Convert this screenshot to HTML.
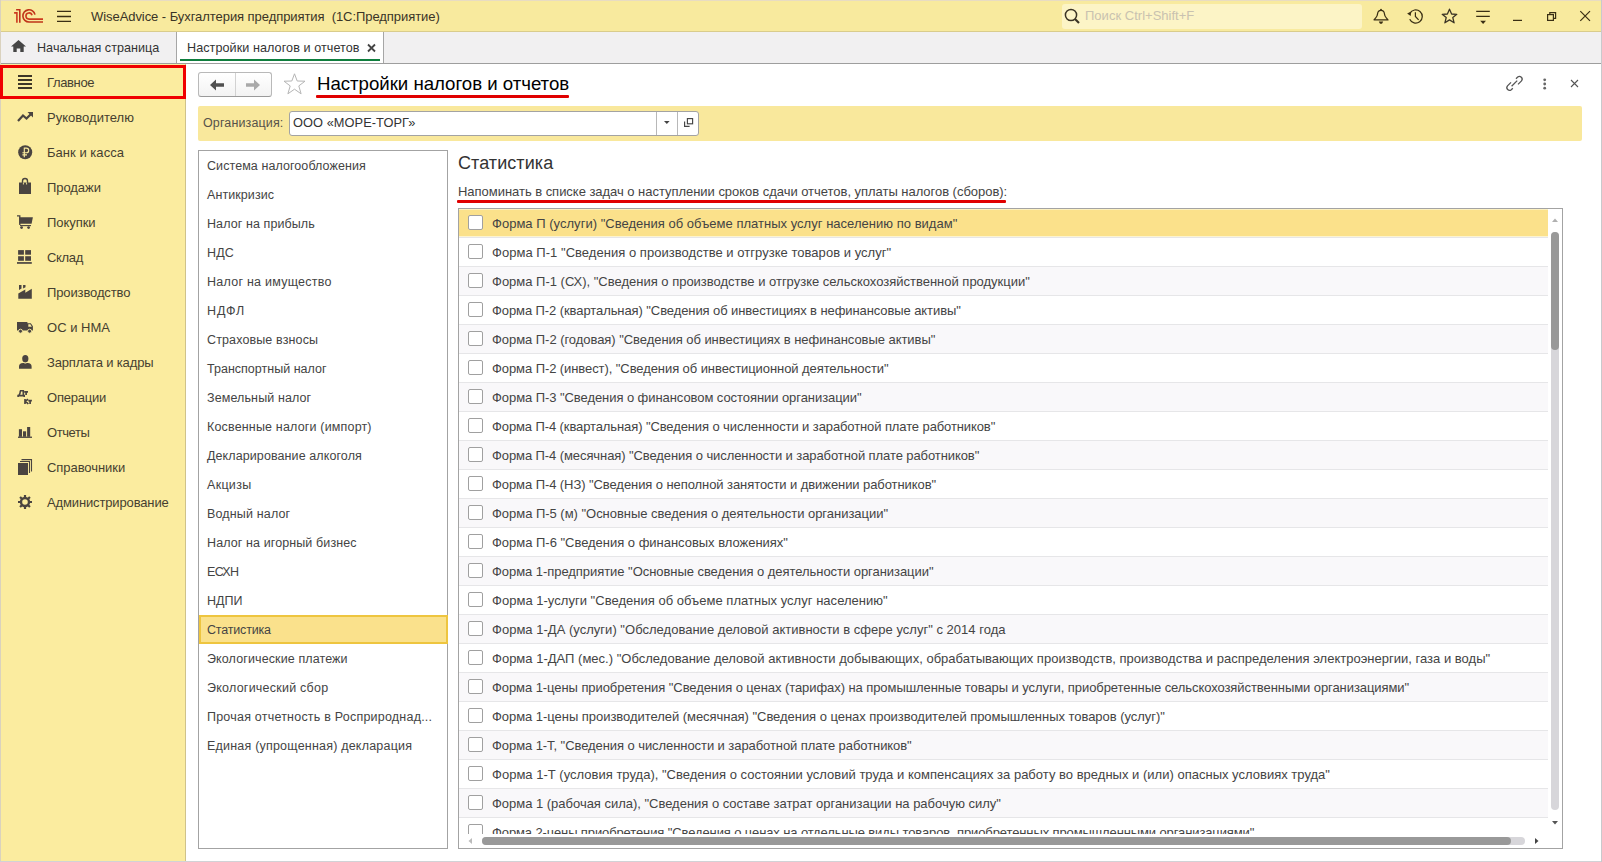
<!DOCTYPE html>
<html><head><meta charset="utf-8">
<style>
html,body{margin:0;padding:0;}
body{width:1602px;height:862px;position:relative;overflow:hidden;background:#fff;font-family:'Liberation Sans',sans-serif;}
.t{position:absolute;white-space:nowrap;font-family:'Liberation Sans',sans-serif;}
.r{position:absolute;box-sizing:border-box;}
svg{position:absolute;overflow:visible;}
</style></head><body>
<div class="r" style="left:0px;top:0px;width:1602px;height:32px;background:#F8EA9E;border-bottom:1px solid #D9CC8C;border-top:1px solid #E8DCC2;"></div>
<div class="r" style="left:0px;top:0px;width:1px;height:862px;background:#DAD2BE;"></div>
<svg style="left:12px;top:6px" width="34" height="20" viewBox="12 6 34 20">
<path d="M14.1 12.9 H16.9 V22.8" fill="none" stroke="#CC3A1E" stroke-width="1.6"/>
<path d="M16.1 9.8 H19.8 V22.8" fill="none" stroke="#C0321A" stroke-width="1.6"/>
<path d="M34.97 14.63 A6.1 6.1 0 1 0 29 22 H43" fill="none" stroke="#BF3419" stroke-width="1.6"/>
<path d="M32.03 15.26 A3.1 3.1 0 1 0 29 19.1 H43" fill="none" stroke="#CC3A1E" stroke-width="1.6"/>
</svg>
<svg style="left:56px;top:8px" width="16" height="16" viewBox="0 0 16 16"><path d="M1 3.4 H15 M1 8.5 H15 M1 13.4 H15" stroke="#3A2F14" stroke-width="1.3"/></svg><div class="t" id="t86dcb41e" style="left:91px;top:7px;font-size:13px;line-height:20px;color:#3A3426;letter-spacing:-0.062px;">WiseAdvice - Бухгалтерия предприятия&nbsp; (1С:Предприятие)</div>
<div class="r" style="left:1062px;top:4px;width:300px;height:25px;background:#FCF4C6;border-radius:3px;"></div>
<svg style="left:1064px;top:8px" width="17" height="16" viewBox="0 0 17 16">
<circle cx="7" cy="7" r="5.6" fill="none" stroke="#3B3425" stroke-width="1.5"/>
<path d="M11 11 L15 15" stroke="#3B3425" stroke-width="2.2"/>
</svg><div class="t" id="t43bdef1c" style="left:1085px;top:6px;font-size:13px;line-height:20px;color:#C9C2B0;letter-spacing:0.018px;">Поиск Ctrl+Shift+F</div>
<svg style="left:1372px;top:8px" width="18" height="17" viewBox="0 0 18 17">
<path d="M2 11.9 H16 L14.3 9.9 Q12.6 8 12.4 5.6 Q12.1 2.3 9 2.3 Q5.9 2.3 5.6 5.6 Q5.4 8 3.7 9.9 Z" fill="none" stroke="#3A2F14" stroke-width="1.2" stroke-linejoin="round"/>
<circle cx="9" cy="1.6" r="0.9" fill="#3A2F14"/>
<path d="M6.8 13.6 H11.2 Q10.6 15.9 9 15.9 Q7.4 15.9 6.8 13.6 Z" fill="#3A2F14"/>
</svg>
<svg style="left:1406px;top:8px" width="18" height="17" viewBox="0 0 18 17">
<path d="M3.9 5.3 A6.6 6.6 0 1 1 3.7 11.3" fill="none" stroke="#3A2F14" stroke-width="1.25"/>
<path d="M1.1 5.4 L5.3 3.6 L4.7 8 Z" fill="#3A2F14"/>
<path d="M9.4 4.3 V8.4 L12.6 11.8" fill="none" stroke="#3A2F14" stroke-width="1.2"/>
</svg>
<svg style="left:1441px;top:8px" width="17" height="17" viewBox="0 0 17 17">
<path d="M8.5 1.2 L10.6 6 L15.8 6.3 L11.8 9.6 L13.1 14.8 L8.5 11.9 L3.9 14.8 L5.2 9.6 L1.2 6.3 L6.4 6 Z" fill="none" stroke="#3B3425" stroke-width="1.3" stroke-linejoin="round"/>
</svg>
<svg style="left:1476px;top:9px" width="16" height="16" viewBox="0 0 16 16">
<path d="M0.2 2.4 H13.8 M0.2 7.4 H13.8" stroke="#3A2F14" stroke-width="1.2"/>
<path d="M4.2 11.8 H10 L7.1 14.9 Z" fill="#3A2F14"/>
</svg>
<svg style="left:1512px;top:12px" width="12" height="10" viewBox="0 0 12 10">
<path d="M1 8.4 H10" stroke="#3A2F14" stroke-width="1.25"/>
</svg>
<svg style="left:1546px;top:11px" width="12" height="11" viewBox="0 0 12 11">
<rect x="1.6" y="3.6" width="5.8" height="5.8" fill="none" stroke="#3A2F14" stroke-width="1.2"/>
<path d="M3.8 3.6 V1.6 H9.6 V7.4 H7.4" fill="none" stroke="#3A2F14" stroke-width="1.2"/>
</svg>
<svg style="left:1579px;top:10px" width="13" height="12" viewBox="0 0 13 12">
<path d="M1.3 1.2 L11 10.9 M11 1.2 L1.3 10.9" stroke="#3A2F14" stroke-width="1.2"/>
</svg>
<div class="r" style="left:1px;top:32px;width:1601px;height:32px;background:#F1F0F1;border-bottom:1px solid #9E9E9E;"></div>
<svg style="left:11px;top:40px" width="15" height="13" viewBox="0 0 15 13">
<path d="M7.5 0 L15 6.5 L12.7 6.5 L12.7 12 L9.3 12 L9.3 8.5 L5.7 8.5 L5.7 12 L2.3 12 L2.3 6.5 L0 6.5 Z" fill="#454545"/>
</svg><div class="t" id="t779e3369" style="left:37px;top:38px;font-size:12.6px;line-height:20px;color:#333;letter-spacing:0.029px;">Начальная страница</div>
<div class="r" style="left:176px;top:32px;width:1px;height:31px;background:#A6A6A6;"></div>
<div class="r" style="left:177px;top:32px;width:206px;height:31px;background:#fff;"></div>
<div class="r" style="left:383px;top:32px;width:1px;height:31px;background:#A6A6A6;"></div>
<div class="t" id="t9a33e0be" style="left:187px;top:38px;font-size:12.6px;line-height:20px;color:#333;letter-spacing:0.069px;">Настройки налогов и отчетов</div>
<svg style="left:367px;top:44px" width="9" height="8" viewBox="0 0 9 8">
<path d="M1 0.5 L8 7.5 M8 0.5 L1 7.5" stroke="#444" stroke-width="1.8"/>
</svg><div class="r" style="left:180px;top:59px;width:200px;height:2px;background:#0F7E3E;"></div>
<div class="r" style="left:1px;top:64px;width:184px;height:798px;background:#FBEC9F;"></div>
<div class="r" style="left:185px;top:64px;width:1px;height:798px;background:#CFC28A;"></div>
<div class="t" id="t361abbbb" style="left:47px;top:73px;font-size:13px;line-height:20px;color:#463F30;letter-spacing:-0.367px;">Главное</div>
<div class="t" id="tafd24f8f" style="left:47px;top:108px;font-size:13px;line-height:20px;color:#463F30;letter-spacing:0.018px;">Руководителю</div>
<div class="t" id="t6673fe61" style="left:47px;top:143px;font-size:13px;line-height:20px;color:#463F30;letter-spacing:0.036px;">Банк и касса</div>
<div class="t" id="t823a501d" style="left:47px;top:178px;font-size:13px;line-height:20px;color:#463F30;letter-spacing:-0.067px;">Продажи</div>
<div class="t" id="tc7642419" style="left:47px;top:213px;font-size:13px;line-height:20px;color:#463F30;letter-spacing:-0.050px;">Покупки</div>
<div class="t" id="t56518b8f" style="left:47px;top:248px;font-size:13px;line-height:20px;color:#463F30;letter-spacing:-0.325px;">Склад</div>
<div class="t" id="t04b6b5b1" style="left:47px;top:283px;font-size:13px;line-height:20px;color:#463F30;letter-spacing:-0.118px;">Производство</div>
<div class="t" id="t0a79c598" style="left:47px;top:318px;font-size:13px;line-height:20px;color:#463F30;letter-spacing:0.014px;">ОС и НМА</div>
<div class="t" id="t72efa0ac" style="left:47px;top:353px;font-size:13px;line-height:20px;color:#463F30;letter-spacing:-0.147px;">Зарплата и кадры</div>
<div class="t" id="t6da008da" style="left:47px;top:388px;font-size:13px;line-height:20px;color:#463F30;letter-spacing:-0.214px;">Операции</div>
<div class="t" id="t73426768" style="left:47px;top:423px;font-size:13px;line-height:20px;color:#463F30;letter-spacing:-0.420px;">Отчеты</div>
<div class="t" id="tc0ac6ee1" style="left:47px;top:458px;font-size:13px;line-height:20px;color:#463F30;letter-spacing:-0.060px;">Справочники</div>
<div class="t" id="t04bb03cb" style="left:47px;top:493px;font-size:13px;line-height:20px;color:#463F30;letter-spacing:-0.138px;">Администрирование</div>
<div class="r" style="left:0px;top:65px;width:186px;height:34px;border:3px solid #F00000;"></div>
<svg style="left:18px;top:75px" width="14" height="14" viewBox="0 0 14 14"><path d="M0 1 H14 M0 5 H14 M0 9 H14 M0 13 H14" stroke="#3D3627" stroke-width="2"/></svg>
<svg style="left:17px;top:111px" width="17" height="11" viewBox="0 0 17 11"><path d="M1 10 L6 4.5 L9.5 7.5 L15 2" fill="none" stroke="#4A4440" stroke-width="2.2"/><path d="M10.5 1 H16 V6.5 Z" fill="#4A4440"/></svg>
<svg style="left:18px;top:145px" width="15" height="15" viewBox="0 0 15 15"><circle cx="7.2" cy="7.2" r="7" fill="#4A4440"/><path d="M6.3 12.2 V3.1 H8.4 A2.3 2.3 0 0 1 8.4 7.7 H4.4 M4.4 9.8 H9" fill="none" stroke="#FBEC9F" stroke-width="1.15"/></svg>
<svg style="left:18px;top:178px" width="14" height="17" viewBox="0 0 14 17"><path d="M1 4.5 H13 V16 H1 Z" fill="#4A4440"/><path d="M4.5 7 V3 A2.5 2.5 0 0 1 9.5 3 V7" fill="none" stroke="#4A4440" stroke-width="1.4"/><path d="M5.4 4.5 V6.5 M8.6 4.5 V6.5" stroke="#FBEC9F" stroke-width="0.9"/></svg>
<svg style="left:14px;top:210px" width="24" height="24" viewBox="14 210 24 24"><path d="M17 215.9 H19.8 V225" fill="none" stroke="#4A4440" stroke-width="1.3"/><path d="M19.2 217.2 H32.9 L31.6 223.8 H19.2 Z" fill="#4A4440"/><path d="M20 225.6 H31" stroke="#4A4440" stroke-width="1.1"/><circle cx="21.6" cy="227.6" r="1.4" fill="#4A4440"/><circle cx="28.6" cy="227.6" r="1.4" fill="#4A4440"/></svg>
<svg style="left:17px;top:250px" width="16" height="15" viewBox="0 0 16 15"><rect x="1.1" y="0.1" width="5.8" height="4.6" fill="#4A4440"/><rect x="8.2" y="0.1" width="5.8" height="4.6" fill="#4A4440"/><rect x="1.1" y="6.2" width="5.8" height="4.6" fill="#4A4440"/><rect x="8.2" y="6.2" width="5.8" height="4.6" fill="#4A4440"/><rect x="0" y="12.1" width="14.8" height="1.7" fill="#4A4440"/></svg>
<svg style="left:14px;top:280px" width="24" height="22" viewBox="14 280 24 22"><path d="M18.3 298.8 V293.4 L25.3 289.5 V292.7 L31.8 288.7 V298.8 Z" fill="#4A4440"/><path d="M19 285 H21.5 V288.6 L19 290 Z M23.1 285 H25.5 V287.2 L23.1 288.5 Z" fill="#4A4440"/></svg>
<svg style="left:14px;top:318px" width="24" height="18" viewBox="14 318 24 18"><path d="M17 322 H27.4 V323.2 H30.8 L32.9 326.2 V330.4 H17 Z" fill="#4A4440"/><path d="M28.3 324.3 H30.3 L31.8 326.7 H28.3 Z" fill="#FBEC9F"/><circle cx="20.5" cy="331.2" r="2" fill="#4A4440" stroke="#FBEC9F" stroke-width="0.9"/><circle cx="29.6" cy="331.2" r="2" fill="#4A4440" stroke="#FBEC9F" stroke-width="0.9"/></svg>
<svg style="left:19px;top:355px" width="13" height="14" viewBox="0 0 13 14"><ellipse cx="6.3" cy="3.7" rx="3.1" ry="3.7" fill="#4A4440"/><path d="M0 13.8 V11.6 A4 3.6 0 0 1 4 8 H8.6 A4 3.6 0 0 1 12.6 11.6 V13.8 Z" fill="#4A4440"/><path d="M4.4 7.4 Q6.3 9.2 8.2 7.4" fill="none" stroke="#FBEC9F" stroke-width="0.8"/></svg>
<svg style="left:14px;top:386px" width="22" height="20" viewBox="14 386 22 20"><path d="M19.9 390.8 H23.3 V395.6 M20.4 390.8 Q20.2 394.5 18.7 395.6 M18.1 397 V395.6 H24.2 V397" fill="none" stroke="#4A4440" stroke-width="1.6"/><path d="M24.2 391.9 H28 M26.1 391.9 V395" fill="none" stroke="#4A4440" stroke-width="1.7"/><path d="M25 399 V404 M25.3 401.6 L27.9 399.1 M25.7 401.3 L28.3 404" fill="none" stroke="#4A4440" stroke-width="1.7"/><path d="M28.3 400.7 H31.9 M30.1 400.7 V404" fill="none" stroke="#4A4440" stroke-width="1.7"/></svg>
<svg style="left:18px;top:426px" width="15" height="12" viewBox="0 0 15 12"><rect x="0.9" y="3.2" width="3.1" height="7.6" fill="#4A4440"/><rect x="5" y="5.3" width="3.1" height="5.5" fill="#4A4440"/><rect x="9.1" y="1" width="3.1" height="9.8" fill="#4A4440"/><rect x="0" y="10.6" width="14" height="1.3" fill="#4A4440"/></svg>
<svg style="left:18px;top:459px" width="15" height="17" viewBox="0 0 15 17"><rect x="0" y="4" width="10" height="12" fill="#4A4440"/><path d="M2 2.5 H11.5 V14" fill="none" stroke="#4A4440" stroke-width="1.1"/><path d="M3.5 0.6 H13.5 V12.5" fill="none" stroke="#4A4440" stroke-width="1.1"/></svg>
<svg style="left:18px;top:495px" width="14" height="14" viewBox="0 0 14 14"><circle cx="7" cy="7" r="4" fill="none" stroke="#4A4440" stroke-width="2.4"/><path d="M11.50 7.00 L14.00 7.00 M10.18 10.18 L11.95 11.95 M7.00 11.50 L7.00 14.00 M3.82 10.18 L2.05 11.95 M2.50 7.00 L0.00 7.00 M3.82 3.82 L2.05 2.05 M7.00 2.50 L7.00 0.00 M10.18 3.82 L11.95 2.05" stroke="#4A4440" stroke-width="2.2"/></svg>
<div class="r" style="left:198px;top:72px;width:74px;height:25px;background:linear-gradient(#FFFFFF,#F3F3F3);border:1px solid #B9B9B9;border-bottom-color:#9A9A9A;border-radius:3px;"></div>
<div class="r" style="left:235px;top:73px;width:1px;height:23px;background:#D2D2D2;"></div>
<svg style="left:210px;top:79px" width="15" height="12" viewBox="0 0 15 12">
<path d="M0 6 L6 0.5 V4.3 H14 V7.7 H6 V11.5 Z" fill="#505050"/></svg>
<svg style="left:246px;top:79px" width="15" height="12" viewBox="0 0 15 12">
<path d="M14 6 L8 0.5 V4.3 H0 V7.7 H8 V11.5 Z" fill="#A9A9A9"/></svg>
<svg style="left:283px;top:73px" width="23" height="22" viewBox="0 0 23 22">
<path d="M11.5 0.8 L14.2 8 L22 8.2 L15.8 12.9 L18.1 20.8 L11.5 16.2 L4.9 20.8 L7.2 12.9 L1 8.2 L8.8 8 Z" fill="none" stroke="#B5B5B5" stroke-width="1"/></svg>
<div class="t" id="t4a05520b" style="left:317px;top:74px;font-size:18.67px;line-height:20px;color:#000;letter-spacing:-0.027px;">Настройки налогов и отчетов</div>
<div class="r" style="left:316px;top:95px;width:253px;height:3px;background:#E00000;border-radius:1px;"></div>
<svg style="left:1506px;top:75px" width="17" height="17" viewBox="0 0 17 17">
<path d="M6.8 13.2 L5.3 14.7 A2.7 2.7 0 0 1 1.5 10.9 L5 7.4" fill="none" stroke="#555" stroke-width="1.3"/>
<path d="M10 3.8 L11.7 2.1 A2.7 2.7 0 0 1 15.5 5.9 L12 9.4" fill="none" stroke="#555" stroke-width="1.3"/>
<path d="M5.6 11.2 L11.2 5.6" stroke="#555" stroke-width="1.3"/></svg>
<svg style="left:1542px;top:77.5px" width="6" height="13" viewBox="0 0 6 13">
<circle cx="2.7" cy="1.8" r="1.4" fill="#666"/><circle cx="2.7" cy="6" r="1.4" fill="#666"/><circle cx="2.7" cy="10.2" r="1.4" fill="#666"/></svg>
<svg style="left:1570px;top:79px" width="9" height="9" viewBox="0 0 9 9">
<path d="M1 1 L8 8 M8 1 L1 8" stroke="#555" stroke-width="1.1"/></svg>
<div class="r" style="left:198px;top:106px;width:1384px;height:35px;background:#F9E89C;border-radius:2px;"></div>
<div class="t" id="tdc14d2f1" style="left:203px;top:113px;font-size:12.5px;line-height:20px;color:#57524A;letter-spacing:0.127px;">Организация:</div>
<div class="r" style="left:289px;top:111px;width:410px;height:25px;background:#fff;border:1px solid #A3A3A3;border-radius:3px;"></div>
<div class="r" style="left:656px;top:112px;width:1px;height:23px;background:#B8B8B8;"></div>
<div class="r" style="left:677px;top:112px;width:1px;height:23px;background:#B8B8B8;"></div>
<div class="t" id="t6c060078" style="left:293px;top:113px;font-size:12.8px;line-height:20px;color:#333;letter-spacing:0.064px;">ООО «МОРЕ-ТОРГ»</div>
<svg style="left:663px;top:120px" width="8" height="5" viewBox="0 0 8 5"><path d="M1 1 H6.6 L3.8 4.1 Z" fill="#444"/></svg>
<svg style="left:683px;top:117px" width="11" height="11" viewBox="0 0 11 11">
<rect x="4.4" y="1.6" width="5.2" height="5.2" fill="none" stroke="#444" stroke-width="1.15"/>
<path d="M1.6 4.4 V9.3 H6.6" fill="none" stroke="#444" stroke-width="1.15"/></svg>
<div class="r" style="left:198px;top:150px;width:250px;height:699px;border:1px solid #A3A3A3;background:#fff;"></div>
<div class="r" style="left:199px;top:615px;width:249px;height:29px;background:#FAE18C;border:2px solid #EEC53F;"></div>
<div class="t" id="t33a95462" style="left:207px;top:156px;font-size:12.5px;line-height:20px;color:#444;letter-spacing:0.077px;">Система налогообложения</div>
<div class="t" id="t077c8df1" style="left:207px;top:185px;font-size:12.5px;line-height:20px;color:#444;letter-spacing:0.078px;">Антикризис</div>
<div class="t" id="t2cc5da02" style="left:207px;top:214px;font-size:12.5px;line-height:20px;color:#444;letter-spacing:0.093px;">Налог на прибыль</div>
<div class="t" id="t5554ed43" style="left:207px;top:243px;font-size:12.5px;line-height:20px;color:#444;letter-spacing:0.100px;">НДС</div>
<div class="t" id="t862812ff" style="left:207px;top:272px;font-size:12.5px;line-height:20px;color:#444;letter-spacing:0.253px;">Налог на имущество</div>
<div class="t" id="t5a4ff966" style="left:207px;top:301px;font-size:12.5px;line-height:20px;color:#444;letter-spacing:0.933px;">НДФЛ</div>
<div class="t" id="t59fab107" style="left:207px;top:330px;font-size:12.5px;line-height:20px;color:#444;letter-spacing:0.127px;">Страховые взносы</div>
<div class="t" id="t064f5f66" style="left:207px;top:359px;font-size:12.5px;line-height:20px;color:#444;letter-spacing:0.018px;">Транспортный налог</div>
<div class="t" id="teded3ac9" style="left:207px;top:388px;font-size:12.5px;line-height:20px;color:#444;letter-spacing:0.114px;">Земельный налог</div>
<div class="t" id="td8dfff99" style="left:207px;top:417px;font-size:12.5px;line-height:20px;color:#444;letter-spacing:0.171px;">Косвенные налоги (импорт)</div>
<div class="t" id="t3e13dcb5" style="left:207px;top:446px;font-size:12.5px;line-height:20px;color:#444;letter-spacing:0.095px;">Декларирование алкоголя</div>
<div class="t" id="t8f4997e1" style="left:207px;top:475px;font-size:12.5px;line-height:20px;color:#444;letter-spacing:0.300px;">Акцизы</div>
<div class="t" id="t9028f606" style="left:207px;top:504px;font-size:12.5px;line-height:20px;color:#444;letter-spacing:0.155px;">Водный налог</div>
<div class="t" id="t274dfc41" style="left:207px;top:533px;font-size:12.5px;line-height:20px;color:#444;letter-spacing:0.105px;">Налог на игорный бизнес</div>
<div class="t" id="t03092a20" style="left:207px;top:562px;font-size:12.5px;line-height:20px;color:#444;letter-spacing:-0.667px;">ЕСХН</div>
<div class="t" id="tb0480860" style="left:207px;top:591px;font-size:12.5px;line-height:20px;color:#444;">НДПИ</div>
<div class="t" id="te3bf42a9" style="left:207px;top:620px;font-size:12.5px;line-height:20px;color:#444;letter-spacing:-0.178px;">Статистика</div>
<div class="t" id="t58a6f412" style="left:207px;top:649px;font-size:12.5px;line-height:20px;color:#444;letter-spacing:0.115px;">Экологические платежи</div>
<div class="t" id="t4fa932dd" style="left:207px;top:678px;font-size:12.5px;line-height:20px;color:#444;letter-spacing:0.235px;">Экологический сбор</div>
<div class="t" id="t3ce58952" style="left:207px;top:707px;font-size:12.5px;line-height:20px;color:#444;letter-spacing:0.218px;">Прочая отчетность в Росприроднад...</div>
<div class="t" id="t57e3f14d" style="left:207px;top:736px;font-size:12.5px;line-height:20px;color:#444;letter-spacing:0.207px;">Единая (упрощенная) декларация</div>
<div class="t" id="t95316b90" style="left:458px;top:153px;font-size:18px;line-height:20px;color:#333;letter-spacing:0.067px;">Статистика</div>
<div class="t" id="t2f4ff108" style="left:458px;top:182px;font-size:13px;line-height:20px;color:#444;letter-spacing:-0.032px;">Напоминать в списке задач о наступлении сроков сдачи отчетов, уплаты налогов (сборов):</div>
<div class="r" style="left:457px;top:200px;width:549px;height:3px;background:#E00000;border-radius:1px;"></div>
<div class="r" style="left:458px;top:208px;width:1105px;height:641px;border:1px solid #A3A3A3;background:#fff;"></div>
<div style="position:absolute;left:459px;top:209px;width:1089px;height:625px;overflow:hidden">
<div class="r" style="left:0;top:0px;width:1089px;height:28px;background:#FBE18B"></div>
<div class="r" style="left:0;top:0;width:1089px;height:1px;background:#FDF1C0"></div>
<div class="r" style="left:0;top:27px;width:1089px;height:1px;background:#FDF4D0"></div>
<div class="r" style="left:0;top:28px;width:1089px;height:1px;background:#E6E6E8"></div>
<div class="r" style="left:9px;top:6px;width:15px;height:15px;border:1px solid #A0A0A0;border-radius:2px;background:#fff"></div>
<div class="t" id="t5d40de35" style="left:33px;top:5px;font-size:13px;line-height:20px;color:#444;letter-spacing:0.022px;">Форма П (услуги) "Сведения об объеме платных услуг населению по видам"</div>
<div class="r" style="left:0;top:29px;width:1089px;height:28px;background:#FFFFFF"></div>
<div class="r" style="left:0;top:57px;width:1089px;height:1px;background:#E6E6E8"></div>
<div class="r" style="left:9px;top:35px;width:15px;height:15px;border:1px solid #A0A0A0;border-radius:2px;background:#fff"></div>
<div class="t" id="t805a7289" style="left:33px;top:34px;font-size:13px;line-height:20px;color:#444;letter-spacing:0.034px;">Форма П-1 "Сведения о производстве и отгрузке товаров и услуг"</div>
<div class="r" style="left:0;top:58px;width:1089px;height:28px;background:#F9F8FA"></div>
<div class="r" style="left:0;top:86px;width:1089px;height:1px;background:#E6E6E8"></div>
<div class="r" style="left:9px;top:64px;width:15px;height:15px;border:1px solid #A0A0A0;border-radius:2px;background:#fff"></div>
<div class="t" id="te8297a77" style="left:33px;top:63px;font-size:13px;line-height:20px;color:#444;letter-spacing:-0.006px;">Форма П-1 (СХ), "Сведения о производстве и отгрузке сельскохозяйственной продукции"</div>
<div class="r" style="left:0;top:87px;width:1089px;height:28px;background:#FFFFFF"></div>
<div class="r" style="left:0;top:115px;width:1089px;height:1px;background:#E6E6E8"></div>
<div class="r" style="left:9px;top:93px;width:15px;height:15px;border:1px solid #A0A0A0;border-radius:2px;background:#fff"></div>
<div class="t" id="ta81765b0" style="left:33px;top:92px;font-size:13px;line-height:20px;color:#444;letter-spacing:-0.086px;">Форма П-2 (квартальная) "Сведения об инвестициях в нефинансовые активы"</div>
<div class="r" style="left:0;top:116px;width:1089px;height:28px;background:#F9F8FA"></div>
<div class="r" style="left:0;top:144px;width:1089px;height:1px;background:#E6E6E8"></div>
<div class="r" style="left:9px;top:122px;width:15px;height:15px;border:1px solid #A0A0A0;border-radius:2px;background:#fff"></div>
<div class="t" id="t8aecc0e5" style="left:33px;top:121px;font-size:13px;line-height:20px;color:#444;letter-spacing:-0.050px;">Форма П-2 (годовая) "Сведения об инвестициях в нефинансовые активы"</div>
<div class="r" style="left:0;top:145px;width:1089px;height:28px;background:#FFFFFF"></div>
<div class="r" style="left:0;top:173px;width:1089px;height:1px;background:#E6E6E8"></div>
<div class="r" style="left:9px;top:151px;width:15px;height:15px;border:1px solid #A0A0A0;border-radius:2px;background:#fff"></div>
<div class="t" id="te82f6b46" style="left:33px;top:150px;font-size:13px;line-height:20px;color:#444;letter-spacing:-0.080px;">Форма П-2 (инвест), "Сведения об инвестиционной деятельности"</div>
<div class="r" style="left:0;top:174px;width:1089px;height:28px;background:#F9F8FA"></div>
<div class="r" style="left:0;top:202px;width:1089px;height:1px;background:#E6E6E8"></div>
<div class="r" style="left:9px;top:180px;width:15px;height:15px;border:1px solid #A0A0A0;border-radius:2px;background:#fff"></div>
<div class="t" id="tf167342e" style="left:33px;top:179px;font-size:13px;line-height:20px;color:#444;letter-spacing:-0.067px;">Форма П-3 "Сведения о финансовом состоянии организации"</div>
<div class="r" style="left:0;top:203px;width:1089px;height:28px;background:#FFFFFF"></div>
<div class="r" style="left:0;top:231px;width:1089px;height:1px;background:#E6E6E8"></div>
<div class="r" style="left:9px;top:209px;width:15px;height:15px;border:1px solid #A0A0A0;border-radius:2px;background:#fff"></div>
<div class="t" id="tad9086aa" style="left:33px;top:208px;font-size:13px;line-height:20px;color:#444;letter-spacing:-0.104px;">Форма П-4 (квартальная) "Сведения о численности и заработной плате работников"</div>
<div class="r" style="left:0;top:232px;width:1089px;height:28px;background:#F9F8FA"></div>
<div class="r" style="left:0;top:260px;width:1089px;height:1px;background:#E6E6E8"></div>
<div class="r" style="left:9px;top:238px;width:15px;height:15px;border:1px solid #A0A0A0;border-radius:2px;background:#fff"></div>
<div class="t" id="t62aad3bb" style="left:33px;top:237px;font-size:13px;line-height:20px;color:#444;letter-spacing:-0.088px;">Форма П-4 (месячная) "Сведения о численности и заработной плате работников"</div>
<div class="r" style="left:0;top:261px;width:1089px;height:28px;background:#FFFFFF"></div>
<div class="r" style="left:0;top:289px;width:1089px;height:1px;background:#E6E6E8"></div>
<div class="r" style="left:9px;top:267px;width:15px;height:15px;border:1px solid #A0A0A0;border-radius:2px;background:#fff"></div>
<div class="t" id="t71a38a0c" style="left:33px;top:266px;font-size:13px;line-height:20px;color:#444;letter-spacing:-0.078px;">Форма П-4 (НЗ) "Сведения о неполной занятости и движении работников"</div>
<div class="r" style="left:0;top:290px;width:1089px;height:28px;background:#F9F8FA"></div>
<div class="r" style="left:0;top:318px;width:1089px;height:1px;background:#E6E6E8"></div>
<div class="r" style="left:9px;top:296px;width:15px;height:15px;border:1px solid #A0A0A0;border-radius:2px;background:#fff"></div>
<div class="t" id="td9b1c02c" style="left:33px;top:295px;font-size:13px;line-height:20px;color:#444;letter-spacing:-0.027px;">Форма П-5 (м) "Основные сведения о деятельности организации"</div>
<div class="r" style="left:0;top:319px;width:1089px;height:28px;background:#FFFFFF"></div>
<div class="r" style="left:0;top:347px;width:1089px;height:1px;background:#E6E6E8"></div>
<div class="r" style="left:9px;top:325px;width:15px;height:15px;border:1px solid #A0A0A0;border-radius:2px;background:#fff"></div>
<div class="t" id="t68521a18" style="left:33px;top:324px;font-size:13px;line-height:20px;color:#444;letter-spacing:-0.021px;">Форма П-6 "Сведения о финансовых вложениях"</div>
<div class="r" style="left:0;top:348px;width:1089px;height:28px;background:#F9F8FA"></div>
<div class="r" style="left:0;top:376px;width:1089px;height:1px;background:#E6E6E8"></div>
<div class="r" style="left:9px;top:354px;width:15px;height:15px;border:1px solid #A0A0A0;border-radius:2px;background:#fff"></div>
<div class="t" id="t955c38f1" style="left:33px;top:353px;font-size:13px;line-height:20px;color:#444;letter-spacing:-0.052px;">Форма 1-предприятие "Основные сведения о деятельности организации"</div>
<div class="r" style="left:0;top:377px;width:1089px;height:28px;background:#FFFFFF"></div>
<div class="r" style="left:0;top:405px;width:1089px;height:1px;background:#E6E6E8"></div>
<div class="r" style="left:9px;top:383px;width:15px;height:15px;border:1px solid #A0A0A0;border-radius:2px;background:#fff"></div>
<div class="t" id="taca753c6" style="left:33px;top:382px;font-size:13px;line-height:20px;color:#444;letter-spacing:0.024px;">Форма 1-услуги "Сведения об объеме платных услуг населению"</div>
<div class="r" style="left:0;top:406px;width:1089px;height:28px;background:#F9F8FA"></div>
<div class="r" style="left:0;top:434px;width:1089px;height:1px;background:#E6E6E8"></div>
<div class="r" style="left:9px;top:412px;width:15px;height:15px;border:1px solid #A0A0A0;border-radius:2px;background:#fff"></div>
<div class="t" id="t8babc4f1" style="left:33px;top:411px;font-size:13px;line-height:20px;color:#444;letter-spacing:0.019px;">Форма 1-ДА (услуги) "Обследование деловой активности в сфере услуг" с 2014 года</div>
<div class="r" style="left:0;top:435px;width:1089px;height:28px;background:#FFFFFF"></div>
<div class="r" style="left:0;top:463px;width:1089px;height:1px;background:#E6E6E8"></div>
<div class="r" style="left:9px;top:441px;width:15px;height:15px;border:1px solid #A0A0A0;border-radius:2px;background:#fff"></div>
<div class="t" id="td8587126" style="left:33px;top:440px;font-size:13px;line-height:20px;color:#444;letter-spacing:0.009px;">Форма 1-ДАП (мес.) "Обследование деловой активности добывающих, обрабатывающих производств, производства и распределения электроэнергии, газа и воды"</div>
<div class="r" style="left:0;top:464px;width:1089px;height:28px;background:#F9F8FA"></div>
<div class="r" style="left:0;top:492px;width:1089px;height:1px;background:#E6E6E8"></div>
<div class="r" style="left:9px;top:470px;width:15px;height:15px;border:1px solid #A0A0A0;border-radius:2px;background:#fff"></div>
<div class="t" id="t1577e806" style="left:33px;top:469px;font-size:13px;line-height:20px;color:#444;letter-spacing:-0.074px;">Форма 1-цены приобретения "Сведения о ценах (тарифах) на промышленные товары и услуги, приобретенные сельскохозяйственными организациями"</div>
<div class="r" style="left:0;top:493px;width:1089px;height:28px;background:#FFFFFF"></div>
<div class="r" style="left:0;top:521px;width:1089px;height:1px;background:#E6E6E8"></div>
<div class="r" style="left:9px;top:499px;width:15px;height:15px;border:1px solid #A0A0A0;border-radius:2px;background:#fff"></div>
<div class="t" id="t3ea5c8db" style="left:33px;top:498px;font-size:13px;line-height:20px;color:#444;letter-spacing:-0.042px;">Форма 1-цены производителей (месячная) "Сведения о ценах производителей промышленных товаров (услуг)"</div>
<div class="r" style="left:0;top:522px;width:1089px;height:28px;background:#F9F8FA"></div>
<div class="r" style="left:0;top:550px;width:1089px;height:1px;background:#E6E6E8"></div>
<div class="r" style="left:9px;top:528px;width:15px;height:15px;border:1px solid #A0A0A0;border-radius:2px;background:#fff"></div>
<div class="t" id="tfc2a345c" style="left:33px;top:527px;font-size:13px;line-height:20px;color:#444;letter-spacing:-0.072px;">Форма 1-Т, "Сведения о численности и заработной плате работников"</div>
<div class="r" style="left:0;top:551px;width:1089px;height:28px;background:#FFFFFF"></div>
<div class="r" style="left:0;top:579px;width:1089px;height:1px;background:#E6E6E8"></div>
<div class="r" style="left:9px;top:557px;width:15px;height:15px;border:1px solid #A0A0A0;border-radius:2px;background:#fff"></div>
<div class="t" id="t8981d036" style="left:33px;top:556px;font-size:13px;line-height:20px;color:#444;letter-spacing:0.011px;">Форма 1-Т (условия труда), "Сведения о состоянии условий труда и компенсациях за работу во вредных и (или) опасных условиях труда"</div>
<div class="r" style="left:0;top:580px;width:1089px;height:28px;background:#F9F8FA"></div>
<div class="r" style="left:0;top:608px;width:1089px;height:1px;background:#E6E6E8"></div>
<div class="r" style="left:9px;top:586px;width:15px;height:15px;border:1px solid #A0A0A0;border-radius:2px;background:#fff"></div>
<div class="t" id="t9fa7b358" style="left:33px;top:585px;font-size:13px;line-height:20px;color:#444;letter-spacing:-0.019px;">Форма 1 (рабочая сила), "Сведения о составе затрат организации на рабочую силу"</div>
<div class="r" style="left:0;top:609px;width:1089px;height:28px;background:#FFFFFF"></div>
<div class="r" style="left:0;top:637px;width:1089px;height:1px;background:#E6E6E8"></div>
<div class="r" style="left:9px;top:615px;width:15px;height:15px;border:1px solid #A0A0A0;border-radius:2px;background:#fff"></div>
<div class="t" id="t4c3bb3cf" style="left:33px;top:614px;font-size:13px;line-height:20px;color:#444;letter-spacing:-0.114px;">Форма 2-цены приобретения "Сведения о ценах на отдельные виды товаров, приобретенных промышленными организациями"</div>
</div>
<svg style="left:1551px;top:217px" width="8" height="6" viewBox="0 0 8 6"><path d="M1 5 H7 L4 1.5 Z" fill="#B0B0B0"/></svg><div class="r" style="left:1551px;top:232px;width:8px;height:578px;background:#D7D6DA;border-radius:4px;"></div>
<div class="r" style="left:1551px;top:232px;width:8px;height:118px;background:#999;border-radius:4px;"></div>
<svg style="left:1551px;top:820px" width="8" height="6" viewBox="0 0 8 6"><path d="M1 1 H7 L4 4.5 Z" fill="#555"/></svg><svg style="left:467px;top:837px" width="6" height="8" viewBox="0 0 6 8"><path d="M5 1 V7 L1.5 4 Z" fill="#BBB"/></svg><div class="r" style="left:482px;top:837px;width:1043px;height:8px;background:#D7D6DA;border-radius:4px;"></div>
<div class="r" style="left:482px;top:837px;width:1029px;height:8px;background:#999;border-radius:4px;"></div>
<svg style="left:1534px;top:837px" width="6" height="8" viewBox="0 0 6 8"><path d="M1 1 V7 L4.5 4 Z" fill="#444"/></svg><div class="r" style="left:0px;top:861px;width:1602px;height:1px;background:#D2D2D6;"></div>
<div class="r" style="left:1601px;top:0px;width:1px;height:862px;background:#C9C9CC;"></div>
</body></html>
